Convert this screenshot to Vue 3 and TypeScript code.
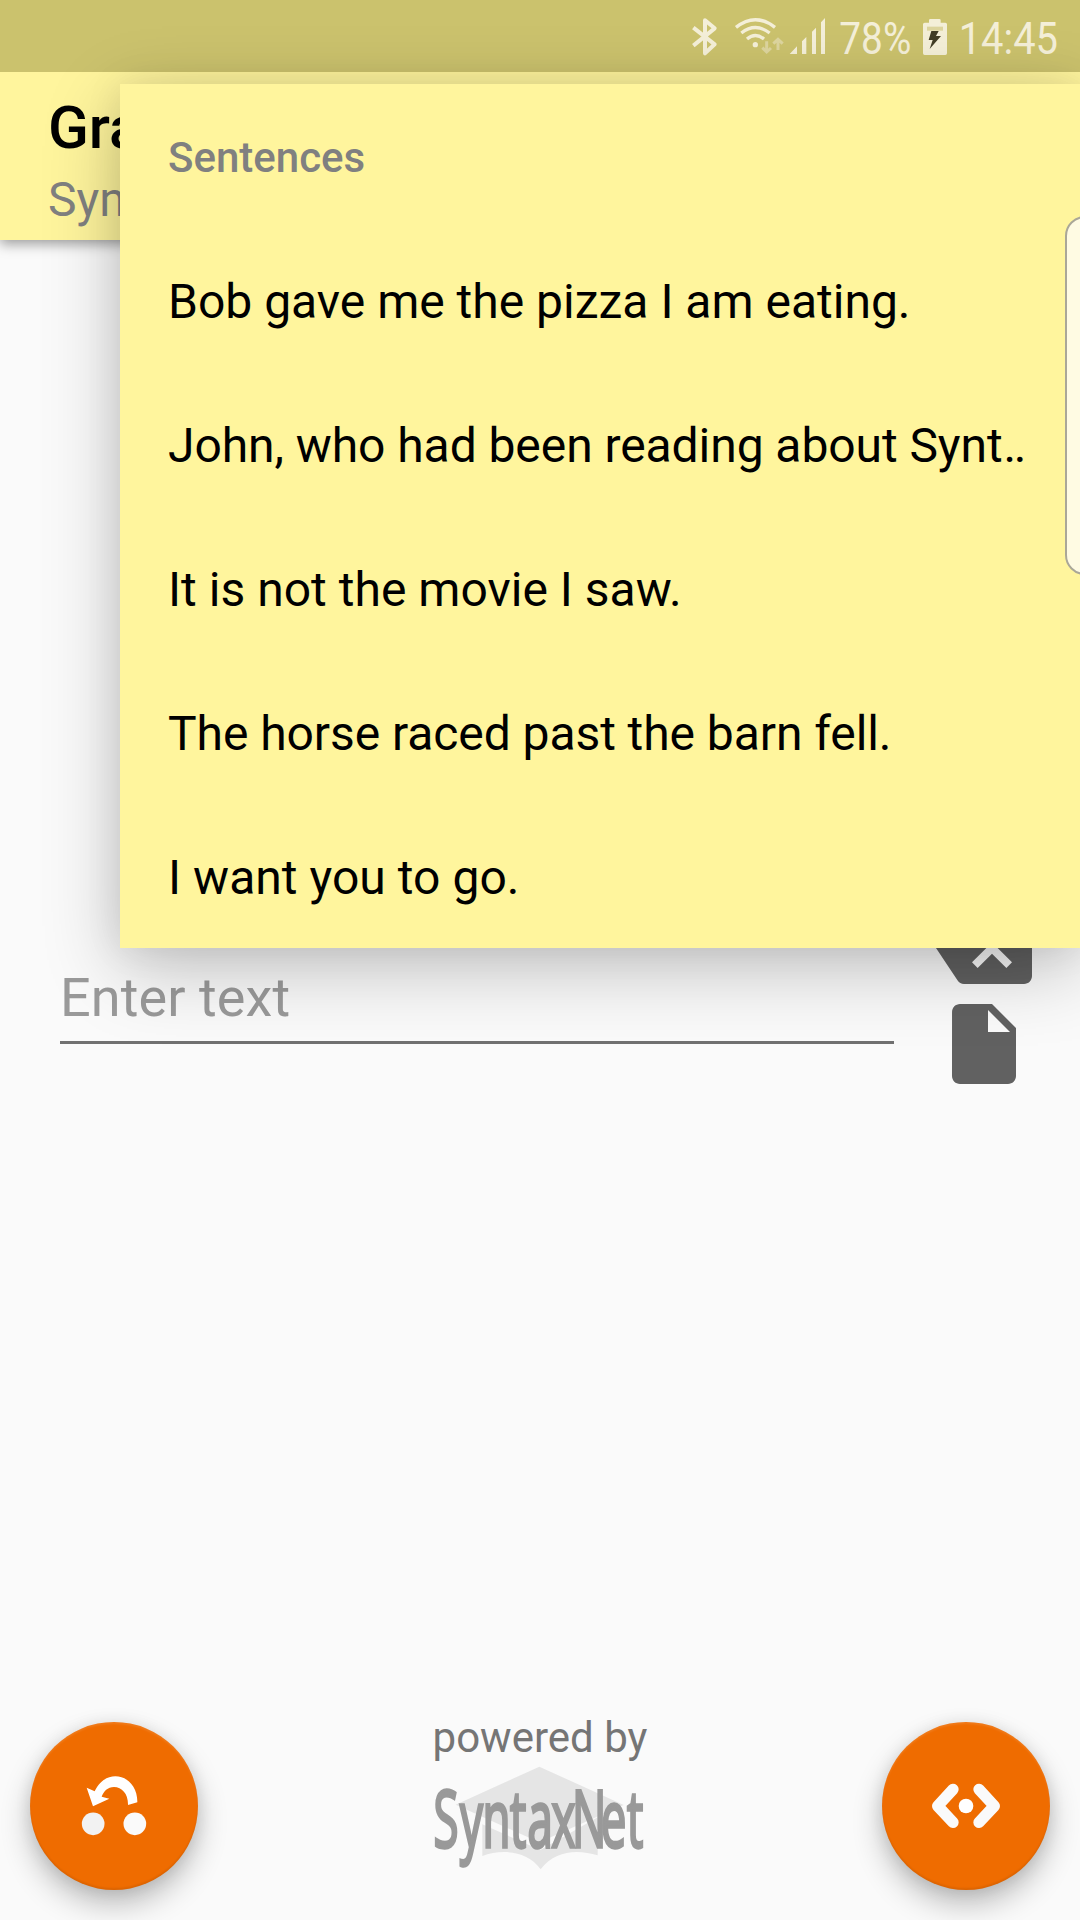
<script setup lang="ts">
interface Sentence {
  text: string
  tail?: string
  spacing: number
}

const sentences: Sentence[] = [
  { text: 'Bob gave me the pizza I am eating.', spacing: 0 },
  { text: 'John, who had been reading about Synt', tail: '..', spacing: -0.07 },
  { text: 'It is not the movie I saw.', spacing: 0.02 },
  { text: 'The horse raced past the barn fell.', spacing: -0.07 },
  { text: 'I want you to go.', spacing: 0.04 },
]
</script>

<template>
  <div class="screen">
    <header class="status">
      <svg class="bt" width="25" height="72" viewBox="66 0 75 216">
        <path d="M70 83L134 133L105 160V61L134 85L70 137" fill="none" stroke="#f4efd8" stroke-width="12" stroke-linejoin="round" />
      </svg>
      <svg class="wifi" width="50" height="72" viewBox="192 0 150 216">
        <g fill="none" stroke="#f4efd8" stroke-width="10">
          <path d="M198 82Q256 36 315 82" />
          <path d="M214 99Q256 66 299 99" />
          <path d="M231 117Q256 96 282 117" />
        </g>
        <circle cx="256" cy="134" r="8" fill="#f4efd8" />
        <path d="M290 124V155M277 143L290 156L303 144M324 150V119M310 131L324 118L338 131" fill="none" stroke="#ddd59e" stroke-width="9" />
      </svg>
      <svg class="signal" width="37" height="72" viewBox="357 0 111 216">
        <path d="M359 162L381 139V162ZM396 162V124L409 111V162ZM426 162V95L438 83V162ZM453 162V67L465 54V162Z" fill="#f4efd8" />
      </svg>
      <svg class="percent" width="71" height="72" viewBox="507 0 213 216">
        <text x="508" y="162" textLength="216" lengthAdjust="spacingAndGlyphs">78%</text>
      </svg>
      <svg class="battery" width="26" height="72" viewBox="756 0 78 216">
        <path d="M764 68H777V61Q777 57 781 57H808Q812 57 812 61V68H826Q831 68 831 73V160Q831 165 826 165H764Q759 165 759 160V73Q759 68 764 68Z" fill="#f4efd8" />
        <path d="M771 80H819V92H771Z" fill="#ddd59e" />
        <path d="M784 93H806L798 108H813L779 147L788 120H776Z" fill="#413d25" />
      </svg>
      <svg class="time" width="98" height="72" viewBox="870 0 294 216">
        <text x="866" y="162" textLength="298" lengthAdjust="spacingAndGlyphs">14:45</text>
      </svg>
    </header>

    <div class="appbar">
      <div class="title">Grammar</div>
      <div class="subtitle">SyntaxNet</div>
    </div>

    <main class="content">
      <div class="entry">
        <div class="field">Enter text</div>
        <div class="actions">
          <svg width="96" height="72" viewBox="0 3 24 18">
            <path d="M22 3H7c-.69 0-1.23.35-1.59.88L0 12l5.41 8.11c.36.53.9.89 1.59.89h15c1.1 0 2-.9 2-2V5c0-1.1-.9-2-2-2zm-3 12.59L17.59 17 14 13.41 10.41 17 9 15.59 12.59 12 9 8.41 10.41 7 14 10.59 17.59 7 19 8.41 15.41 12 19 15.59z" />
          </svg>
          <svg width="64" height="80" viewBox="4 2 16 20">
            <path d="M6 2c-1.1 0-1.99.9-1.99 2L4 20c0 1.1.89 2 1.99 2H18c1.1 0 2-.9 2-2V8l-6-6H6zm7 7V3.5L18.5 9H13z" />
          </svg>
        </div>
      </div>
    </main>

    <footer class="footer">
      <button class="fab" type="button">
        <svg width="168" height="168" viewBox="90 66 504 504">
          <circle cx="279.500" cy="371.500" r="34" fill="#f2f2f2" />
          <circle cx="404.500" cy="371.500" r="34" fill="#fafafa" />
          <path d="M260 263L284 274C298 243 322 229 346 229C382 229 413 260 412 307L384 315C385 282 366 261 342 261C323 261 311 274 305 290L328 296L279 319Z" fill="#fff" />
        </svg>
      </button>
      <div class="powered">
        <div class="caption">powered by</div>
        <svg class="logo" width="220" height="110" viewBox="90 195 660 330">
          <path d="M418 200L671 315L418 427L167 314Z" fill="#e5e5e5" />
          <path d="M247 373L421 450L593 352V466C535 448 466 449 422 508C382 451 304 447 247 468Z" fill="#e5e5e5" />
          <g transform="scale(0.58 1)">
            <text x="173 311 427 569 659 783 890 1039 1174" y="440">SyntaxNet</text>
          </g>
        </svg>
      </div>
      <button class="fab" type="button">
        <svg width="168" height="168" viewBox="66 66 504 504">
          <path d="M279 268L233 318L279 367M357 268L403 318L357 367" fill="none" stroke="#fafafa" stroke-width="34" stroke-linecap="round" stroke-linejoin="round" />
          <circle cx="318" cy="318" r="22" fill="#fff" />
        </svg>
      </button>
    </footer>

    <nav class="menu">
      <div class="row heading">Sentences</div>
      <div v-for="s in sentences" :key="s.text" class="row" :style="{ letterSpacing: s.spacing + 'px' }">{{ s.text }}<span v-if="s.tail" class="tail">{{ s.tail }}</span></div>
    </nav>
    <div class="edge"></div>
  </div>
</template>

<style>
body {
  margin: 0;
}
</style>

<style scoped>
.screen {
  position: relative;
  display: flex;
  flex-direction: column;
  width: 1080px;
  height: 1920px;
  overflow: hidden;
  background: #fafafa;
  font-family: Roboto, sans-serif;
  color: #000;
}
svg {
  display: block;
  flex: none;
  overflow: visible;
}
.status {
  position: relative;
  display: flex;
  justify-content: flex-end;
  height: 72px;
  padding-right: 22px;
  background: #cbc26d;
}
.status text {
  font-size: 135px;
  fill: #f4efd8;
}
.wifi { margin-left: 17px; }
.signal { margin-left: 5px; }
.percent { margin-left: 13px; }
.battery,
.time { margin-left: 12px; }
.appbar {
  box-sizing: border-box;
  height: 168px;
  padding: 21px 48px 0;
  background: #fff59d;
  box-shadow: 0 4px 12px rgba(0, 0, 0, 0.38);
}
.title {
  font-size: 60px;
  font-weight: 500;
  line-height: 70px;
}
.subtitle {
  margin-top: 9px;
  font-size: 48px;
  line-height: 56px;
  color: #808080;
}
.content {
  flex: 1;
  padding: 672px 48px 0 60px;
}
.entry {
  display: flex;
  justify-content: space-between;
}
.field {
  box-sizing: border-box;
  width: 834px;
  height: 132px;
  padding-top: 54px;
  border-bottom: 3px solid #717171;
  font-size: 54px;
  letter-spacing: 0.1px;
  line-height: 64px;
  color: #9a9a9a;
}
.actions {
  display: flex;
  flex-direction: column;
  align-items: center;
  gap: 20px;
}
.actions path {
  fill: #616161;
}
.footer {
  display: flex;
  justify-content: space-between;
  height: 198px;
  padding: 0 30px;
}
.fab {
  width: 168px;
  height: 168px;
  padding: 0;
  border: 0;
  border-radius: 50%;
  background: #ef6c00;
  box-shadow: 0 15px 30px rgba(0, 0, 0, 0.24), 0 2px 16px rgba(0, 0, 0, 0.1),
    inset 0 2px 2px rgba(255, 255, 255, 0.1), inset 0 -2px 2px rgba(0, 0, 0, 0.08);
}
.powered {
  display: flex;
  flex-direction: column;
  align-items: center;
}
.caption {
  margin-top: -9px;
  font-size: 42px;
  line-height: 50px;
  color: #757575;
}
.logo {
  margin-top: 2px;
}
.logo text {
  font-family: 'Open Sans', 'Noto Sans', sans-serif;
  font-size: 236px;
  fill: #999;
  stroke: #999;
  stroke-width: 10px;
}
.menu {
  position: absolute;
  top: 84px;
  left: 120px;
  width: 960px;
  background: #fff59d;
  box-shadow: 0 20px 72px rgba(0, 0, 0, 0.24), 0 0 36px rgba(0, 0, 0, 0.08);
}
.row {
  height: 144px;
  padding-left: 48px;
  font-size: 48px;
  line-height: 148px;
  white-space: nowrap;
}
.tail {
  margin-left: 1px;
  letter-spacing: -2.5px;
}
.heading {
  font-size: 42px;
  font-weight: 500;
  color: #808080;
}
.edge {
  position: absolute;
  top: 216px;
  left: 1065px;
  box-sizing: border-box;
  width: 40px;
  height: 359px;
  border: 2px solid #aaa798;
  border-radius: 20px;
  background: #fffbe3;
}
</style>
